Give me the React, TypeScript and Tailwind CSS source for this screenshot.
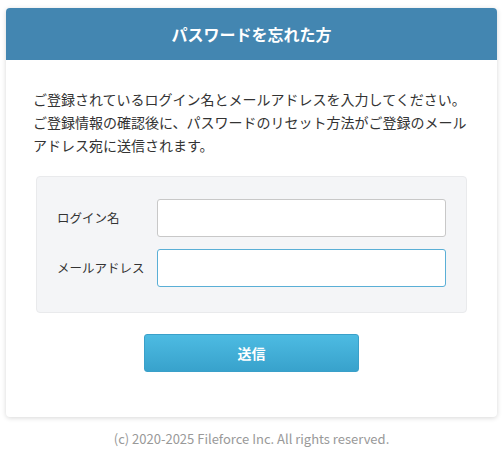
import { useState } from "react";

const jp = "font-['Meiryo','Noto_Sans_CJK_JP',sans-serif]";

export default function App() {
  const [loginName, setLoginName] = useState("");
  const [email, setEmail] = useState("");

  return (
    <main className={`min-h-[451px] w-[503px] bg-white pt-2 ${jp}`}>
      <div className="mx-[6px] overflow-hidden rounded bg-white shadow-[0_1px_5px_rgba(0,0,0,0.16)]">
        <h1 className="flex h-[52px] items-center justify-center bg-[#4386b1] text-[16px] font-bold text-white">
          パスワードを忘れた方
        </h1>

        <div className="px-[27px] pt-[28px] pb-[45px]">
          <p className="text-[14px] leading-[23px] text-[#333]">
            ご登録されているログイン名とメールアドレスを入力してください。ご登録情報の確認後に、パスワードのリセット方法がご登録のメールアドレス宛に送信されます。
          </p>

          <div className="mx-[3px] mt-[19px] flex flex-col gap-3 rounded border border-[#e9eaec] bg-[#f4f5f7] px-[20px] pt-[22px] pb-[25px]">
            <div className="flex items-center">
              <label className="w-[100px] text-[12.5px] text-[#333]">ログイン名</label>
              <input
                value={loginName}
                onChange={(e) => setLoginName(e.target.value)}
                className="h-[38px] flex-1 rounded-[3px] border border-[#c8c8c8] bg-white px-2 text-[13px] outline-none"
              />
            </div>
            <div className="flex items-center">
              <label className="w-[100px] text-[12.5px] text-[#333]">メールアドレス</label>
              <input
                value={email}
                onChange={(e) => setEmail(e.target.value)}
                className="h-[38px] flex-1 rounded-[3px] border border-[#5aafd6] bg-white px-2 text-[13px] outline-none"
              />
            </div>
          </div>

          <div className="mt-[21px] flex justify-center">
            <button className="h-[38px] w-[215px] rounded-[3px] border border-[#3aa0c9] bg-gradient-to-b from-[#4dbbe2] to-[#38a2cc] text-[14px] font-bold text-white">
              送信
            </button>
          </div>
        </div>
      </div>

      <footer className="mt-[12px] text-center text-[13px] text-[#999]">
        (c) 2020-2025 Fileforce Inc. All rights reserved.
      </footer>
    </main>
  );
}
